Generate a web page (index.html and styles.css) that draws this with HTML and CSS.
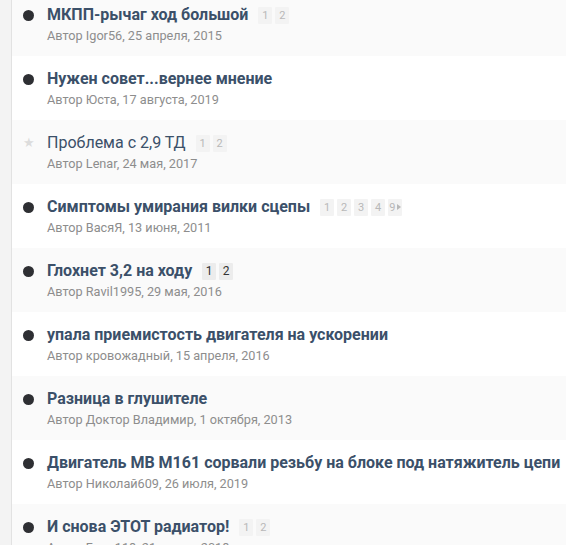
FILE: index.html
```html
<!DOCTYPE html>
<html lang="ru">
<head>
<meta charset="utf-8">
<link rel="stylesheet" href="styles.css">
</head>
<body>
<div class="page">
  <ol class="topics">
    <li class="topic alt">
      <span class="dot"></span>
      <div class="info">
        <div class="title-line"><a class="title">МКПП-рычаг ход большой</a><span class="pages"><span class="pg">1</span><span class="pg">2</span></span></div>
        <div class="meta">Автор Igor56, 25 апреля, 2015</div>
      </div>
    </li>
    <li class="topic">
      <span class="dot"></span>
      <div class="info">
        <div class="title-line"><a class="title">Нужен совет...вернее мнение</a></div>
        <div class="meta">Автор Юста, 17 августа, 2019</div>
      </div>
    </li>
    <li class="topic alt">
      <span class="star">★</span>
      <div class="info">
        <div class="title-line"><a class="title read">Проблема с 2,9 ТД</a><span class="pages"><span class="pg">1</span><span class="pg">2</span></span></div>
        <div class="meta">Автор Lenar, 24 мая, 2017</div>
      </div>
    </li>
    <li class="topic">
      <span class="dot"></span>
      <div class="info">
        <div class="title-line"><a class="title">Симптомы умирания вилки сцепы</a><span class="pages"><span class="pg">1</span><span class="pg">2</span><span class="pg">3</span><span class="pg">4</span><span class="pg">9<span class="arr"></span></span></span></div>
        <div class="meta">Автор ВасяЯ, 13 июня, 2011</div>
      </div>
    </li>
    <li class="topic alt">
      <span class="dot"></span>
      <div class="info">
        <div class="title-line"><a class="title">Глохнет 3,2 на ходу</a><span class="pages dark"><span class="pg">1</span><span class="pg">2</span></span></div>
        <div class="meta">Автор Ravil1995, 29 мая, 2016</div>
      </div>
    </li>
    <li class="topic">
      <span class="dot"></span>
      <div class="info">
        <div class="title-line"><a class="title">упала приемистость двигателя на ускорении</a></div>
        <div class="meta">Автор кровожадный, 15 апреля, 2016</div>
      </div>
    </li>
    <li class="topic alt">
      <span class="dot"></span>
      <div class="info">
        <div class="title-line"><a class="title">Разница в глушителе</a></div>
        <div class="meta">Автор Доктор Владимир, 1 октября, 2013</div>
      </div>
    </li>
    <li class="topic">
      <span class="dot"></span>
      <div class="info">
        <div class="title-line"><a class="title">Двигатель МВ М161 сорвали резьбу на блоке под натяжитель цепи</a></div>
        <div class="meta">Автор Николай609, 26 июля, 2019</div>
      </div>
    </li>
    <li class="topic alt">
      <span class="dot"></span>
      <div class="info">
        <div class="title-line"><a class="title">И снова ЭТОТ радиатор!</a><span class="pages"><span class="pg">1</span><span class="pg">2</span></span></div>
        <div class="meta">Автор Блэк118, 21 марта, 2018</div>
      </div>
    </li>
  </ol>
</div>
</body>
</html>
```

FILE: styles.css
```css
html, body {
  margin: 0;
  padding: 0;
  background: #f3f3f3;
  overflow: hidden;
}
body {
  font-family: Roboto, "Noto Sans", sans-serif;
  width: 566px;
  height: 545px;
}
.page {
  padding-left: 11px;
}
.topics {
  list-style: none;
  margin: -8px 0 0 0;
  padding: 0;
  border-left: 1px solid #e2e2e2;
  background: #fff;
}
.topic {
  display: flex;
  align-items: flex-start;
  height: 64px;
  box-sizing: border-box;
  padding: 13px 0 11px 11px;
  background: #fff;
  white-space: nowrap;
}
.topic.alt {
  background: #fafafa;
}
.dot {
  flex: none;
  width: 11px;
  height: 11px;
  border-radius: 50%;
  background: #2e2f33;
  margin: 5px 13px 0 0;
}
.star {
  flex: none;
  width: 11px;
  margin: 0 13px 0 0;
  font-size: 13px;
  line-height: 20px;
  color: #dcdcdc;
  text-align: center;
}
.info {
  display: flex;
  flex-direction: column;
  gap: 2px;
}
.title-line {
  display: flex;
  align-items: center;
  height: 20px;
}
.title {
  font-size: 16px;
  line-height: 20px;
  font-weight: 700;
  color: #3b5069;
}
.title.read {
  font-weight: 400;
}
.pages {
  display: flex;
  gap: 3px;
  margin-left: 10px;
}
.pg {
  display: flex;
  align-items: center;
  justify-content: center;
  min-width: 14px;
  height: 17px;
  padding: 0 1px;
  box-sizing: border-box;
  background: #f3f3f3;
  color: #b8b8b8;
  font-size: 11px;
  border-radius: 1px;
}
.pages.dark .pg {
  background: #ececec;
  color: #333;
  font-size: 12px;
}
.arr {
  display: inline-block;
  width: 0;
  height: 0;
  margin-left: 2px;
  border-left: 4px solid #b8b8b8;
  border-top: 3px solid transparent;
  border-bottom: 3px solid transparent;
}
.meta {
  font-size: 12.7px;
  line-height: 18px;
  color: #8d8d8d;
}
```
